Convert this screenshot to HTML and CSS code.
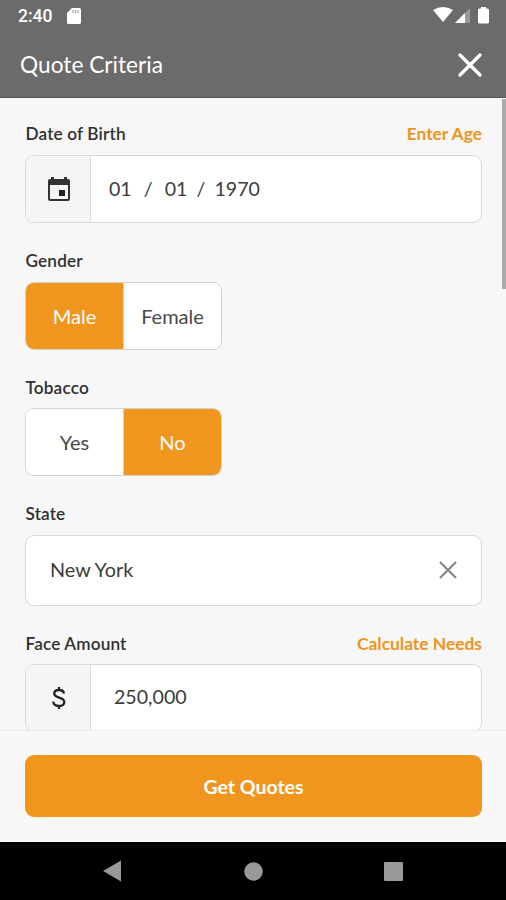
FILE: index.html
```html
<!DOCTYPE html>
<html lang="en">
<head>
<meta charset="utf-8">
<title>Quote Criteria</title>
<link rel="stylesheet" href="styles.css">
</head>
<body>
<div class="phone">
  <header class="top">
    <div class="status">
      <span class="clock">2:40</span>
      <svg class="sd" width="14" height="17" viewBox="0 0 14 17"><path fill="#fff" d="M5 0h7.500Q14 0 14 1.500v13q0 1.500-1.500 1.500h-11Q0 16 0 14.500V5z"/><path stroke="#aaa" stroke-width="1.300" d="M6 2v3M8.500 2v3M11 2v3"/></svg>
      <svg class="signals" width="58" height="18" viewBox="0 0 58 18"><path fill="#fff" d="M0 3Q10-3 20 3L10 15z"/><path fill="#999" d="M22 16L37 1v15z"/><path fill="#fff" d="M22 16L32 6v10z"/><path fill="#fff" d="M48 0h5v1.500h1.500q1.500 0 1.500 1.500v12q0 1.500-1.500 1.500h-8Q45 16.500 45 15V3q0-1.500 1.500-1.500H48z"/></svg>
    </div>
    <div class="bar">
      <h1>Quote Criteria</h1>
      <svg width="26" height="26" viewBox="0 0 26 26"><path d="M3 3l20 20M23 3L3 23" stroke="#fff" stroke-width="3.300" stroke-linecap="round"/></svg>
    </div>
  </header>
  <main class="form">
    <section class="field">
      <div class="label"><span>Date of Birth</span><a>Enter Age</a></div>
      <div class="box">
        <div class="addon"><svg width="24" height="26" viewBox="0 0 24 26"><path fill="#333" fill-rule="evenodd" d="M4 1h3v2h10V1h3v2h1q2 0 2 2v18q0 2-2 2H3q-2 0-2-2V5q0-2 2-2h1zM3 9v14h18V9z"/><path fill="#222" d="M12 14h6v6h-6z"/></svg></div>
        <div class="date"><span>01</span><i>/</i><span>01</span><i>/</i><span>1970</span></div>
      </div>
    </section>
    <section class="field">
      <div class="label"><span>Gender</span></div>
      <div class="toggle"><button class="on">Male</button><button>Female</button></div>
    </section>
    <section class="field">
      <div class="label"><span>Tobacco</span></div>
      <div class="toggle"><button>Yes</button><button class="on">No</button></div>
    </section>
    <section class="field">
      <div class="label"><span>State</span></div>
      <div class="box select"><span>New York</span><svg width="20" height="20" viewBox="0 0 20 20"><path d="M2 2l16 16M18 2L2 18" stroke="#888" stroke-width="2.200"/></svg></div>
    </section>
    <section class="field">
      <div class="label"><span>Face Amount</span><a>Calculate Needs</a></div>
      <div class="box">
        <div class="addon"><svg width="16" height="24" viewBox="0 0 16 24"><path fill="none" stroke="#222" stroke-width="2.300" d="M13 7.500Q12.500 4 8 4 3.200 4 3.200 7.600C3.200 12.800 13.300 10.500 13.300 16q0 4-5.300 4-5.300 0-5.800-4.300M8 1v3m0 16v3"/></svg></div>
        <div class="amount">250,000</div>
      </div>
    </section>
    <div class="scrollbar"></div>
  </main>
  <footer class="actions"><button class="submit">Get Quotes</button></footer>
  <nav class="nav">
    <svg width="506" height="58" viewBox="0 0 506 58"><g fill="#999"><path d="M103 29l18-10.500v21z"/><circle cx="253.500" cy="29.500" r="9.300"/><rect x="384" y="20" width="19" height="19" rx="1"/></g></svg>
  </nav>
</div>
</body>
</html>
```
FILE: styles.css
```css
* { box-sizing: border-box; }
body { margin: 0; font-family: Lato, "Liberation Sans", sans-serif; color: #3c3c3c; }
svg { display: block; flex: none; }
button { font: inherit; border: 0; padding: 0; }
.phone { width: 506px; height: 900px; display: flex; flex-direction: column; overflow: hidden; background: #f7f7f7; }
.top { height: 98px; flex: none; background: #6b6b6c; color: #fff; border-bottom: 1px solid #555; }
.status { height: 32px; display: flex; align-items: center; padding: 0 15px 0 18px; }
.clock { font: 500 17.5px/32px Roboto, sans-serif; width: 49px; }
.signals { margin-left: auto; }
.bar { height: 65px; display: flex; justify-content: space-between; align-items: center; padding: 0 23px 0 20px; }
h1 { margin: 0 0 1px; font-size: 22.7px; font-weight: 400; }
.form { flex: 1; min-height: 0; overflow: hidden; position: relative; padding: 25px 24px 0 25px; }
.field { margin-bottom: 28px; }
.label { height: 20px; margin-bottom: 12px; display: flex; justify-content: space-between; align-items: center; font-size: 17.2px; font-weight: 600; letter-spacing: 0.15px; color: #303030; }
.label span { padding-left: 0.5px; }
.field + .field .label { height: 19px; margin-bottom: 11.6px; }
.label a { color: #ee9420; font-size: 17.4px; font-weight: 700; letter-spacing: 0; }
.box { height: 68px; display: flex; border: 1.500px solid #d9d9d9; border-radius: 9px; background: #fff; overflow: hidden; font-size: 19.6px; }
.addon { width: 65px; flex: none; display: flex; align-items: center; justify-content: center; background: #f5f5f5; border-right: 1px solid #dcdcdc; padding-left: 2px; }
.date { display: flex; align-items: center; padding: 0 0 2px 18px; }
.date i { font-style: normal; width: 33px; text-align: center; }
.date i + span + i { width: 27px; }
.amount { padding-left: 23px; line-height: 64px; }
.toggle { height: 68px; width: 197px; display: flex; border: 1px solid #d2d2d2; border-radius: 9px; overflow: hidden; background: #fff; }
.toggle button { flex: 1; font-size: 20px; color: #4a4a4a; background: #fff; }
.toggle button + button { border-left: 1px solid #d2d2d2; }
.toggle button.on { background: #f0961e; color: #fff; }
.select { height: 71px; align-items: center; justify-content: space-between; padding: 0 23px 0 24px; font-size: 19.8px; }
.select span { padding-bottom: 3px; }
.scrollbar { position: absolute; top: 1px; right: 0; width: 4px; height: 190px; background: #aaa; }
.actions { height: 112px; flex: none; padding: 24px 24px 0 25px; border-top: 1px solid #ececec; background: #f8f8f8; }
.submit { width: 100%; height: 62px; border-radius: 9px; background: #f0961e; color: #fff; font-size: 19.5px; font-weight: 700; }
.nav { height: 58px; flex: none; background: #000; }
```
